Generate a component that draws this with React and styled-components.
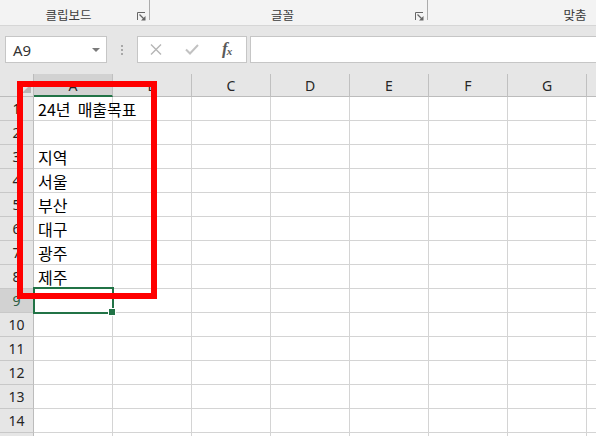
import React from 'react';
import styled, { createGlobalStyle } from 'styled-components';

const GlobalStyle = createGlobalStyle`
  body {
    margin: 0;
    font-family: "Noto Sans", "Noto Sans CJK KR", sans-serif;
  }
`;

const COLS = ['A', 'B', 'C', 'D', 'E', 'F', 'G', 'H'];
const ROWS = 15;
const cellText = {
  1: '24년  매출목표',
  3: '지역',
  4: '서울',
  5: '부산',
  6: '대구',
  7: '광주',
  8: '제주',
};
const SELECTED_ROW = 9;
const GREEN = '#217346';

const Page = styled.div`
  position: relative;
  width: 596px;
  height: 436px;
  overflow: hidden;
  background: #e6e6e6;
`;

const Ribbon = styled.div`
  display: flex;
  height: 25px;
  background: #f3f3f3;
  border-bottom: 1px solid #d6d6d6;
`;

const Group = styled.div`
  display: flex;
  flex: 0 0 ${props => props.width}px;
  align-items: flex-end;
`;

const GroupLabel = styled.div`
  flex: 1;
  text-align: center;
  font-family: "Noto Sans CJK KR", sans-serif;
  font-size: 12.5px;
  line-height: 16px;
  color: #3c3c3c;
  padding-bottom: 2px;
`;

const Launcher = styled.svg`
  width: 9px;
  height: 9px;
  margin: 0 3px 4px 0;
`;

const Separator = styled.div`
  flex: 0 0 1px;
  height: 20px;
  align-self: flex-start;
  background: #ababab;
`;

const FormulaArea = styled.div`
  display: flex;
  height: 27px;
  padding: 10px 0 11px 5px;
`;

const NameBox = styled.div`
  display: flex;
  align-items: center;
  width: 102px;
  box-sizing: border-box;
  border: 1px solid #c6c6c6;
  background: #fff;
  padding: 0 6px 0 7px;
  font-size: 15px;
  color: #333;
`;

const NameText = styled.span`
  flex: 1;
`;

const Caret = styled.span`
  width: 0;
  height: 0;
  border-left: 4px solid transparent;
  border-right: 4px solid transparent;
  border-top: 4px solid #7a7a7a;
`;

const Dots = styled.div`
  display: flex;
  flex-direction: column;
  align-items: center;
  justify-content: center;
  gap: 2px;
  width: 30px;
`;

const Dot = styled.span`
  width: 2px;
  height: 2px;
  background: #a8a8a8;
`;

const FxBox = styled.div`
  display: flex;
  align-items: center;
  gap: 23px;
  width: 110px;
  box-sizing: border-box;
  border: 1px solid #c6c6c6;
  background: #fff;
  padding-left: 12px;
  margin-right: 3px;
`;

const Fx = styled.span`
  font-family: "Liberation Serif", serif;
  font-style: italic;
  font-weight: bold;
  font-size: 17px;
  line-height: 17px;
  color: #5a5a5a;
  letter-spacing: -1px;
  sub {
    font-size: 11px;
    vertical-align: -1px;
  }
`;

const FormulaInput = styled.div`
  flex: 1;
  border: 1px solid #c6c6c6;
  border-right: none;
  background: #fff;
`;

const Sheet = styled.div`
  display: grid;
  grid-template-columns: 34px repeat(8, 79px);
  grid-template-rows: 23px;
  grid-auto-rows: 24px;
`;

const Corner = styled.div`
  display: flex;
  align-items: flex-end;
  justify-content: flex-end;
  box-sizing: border-box;
  border-right: 1px solid #bcbcbc;
  border-bottom: 1px solid #bcbcbc;
  padding: 0 2px 3px 0;
`;

const CornerMark = styled.span`
  width: 0;
  height: 0;
  border-left: 9px solid transparent;
  border-bottom: 9px solid #b6b6b6;
`;

const ColHeader = styled.div`
  display: flex;
  align-items: center;
  justify-content: center;
  box-sizing: border-box;
  background: ${props => (props.active ? '#d2d2d2' : '#e6e6e6')};
  border-right: 1px solid #c0c0c0;
  border-bottom: ${props => (props.active ? `2px solid ${GREEN}` : '1px solid #bcbcbc')};
  font-size: 14px;
  color: #262626;
  padding-top: ${props => (props.active ? '1px' : '0')};
`;

const RowHeader = styled.div`
  display: flex;
  align-items: center;
  justify-content: center;
  box-sizing: border-box;
  background: ${props => (props.active ? '#d2d2d2' : '#e6e6e6')};
  border-right: 1px solid #bcbcbc;
  border-bottom: 1px solid #c8c8c8;
  font-size: 14px;
  color: ${props => (props.active ? '#2f5f45' : '#262626')};
`;

const Cell = styled.div`
  position: relative;
  display: flex;
  align-items: center;
  box-sizing: border-box;
  background: #fff;
  border-right: 1px solid #d4d4d4;
  border-bottom: 1px solid #d4d4d4;
  padding-left: 4px;

  ${props => props.selected && `
    &::after {
      content: '';
      position: absolute;
      left: -1px;
      top: -2px;
      width: 81px;
      height: 27px;
      box-sizing: border-box;
      border: 2px solid ${GREEN};
      z-index: 2;
    }
    &::before {
      content: '';
      position: absolute;
      left: 75px;
      top: 20px;
      width: 6px;
      height: 6px;
      background: ${GREEN};
      box-shadow: 0 0 0 1px #fff;
      z-index: 3;
    }
  `}
`;

/* text spills over the next empty cell, as in Excel */
const CellText = styled.span`
  position: relative;
  z-index: 1;
  font-family: "Noto Sans CJK KR", sans-serif;
  font-size: 16px;
  color: #000;
  white-space: pre;
`;

const Annotation = styled.div`
  position: absolute;
  left: 17px;
  top: 81px;
  width: 140px;
  height: 218px;
  box-sizing: border-box;
  border: 6px solid #ff0000;
  z-index: 5;
  pointer-events: none;
`;

const LauncherIcon = () => (
  <Launcher viewBox="0 0 9 9">
    <path d="M0.5 8V0.5H8" fill="none" stroke="#666" strokeWidth="1" />
    <path d="M2.5 2.5L7 7" fill="none" stroke="#666" strokeWidth="1.2" />
    <path d="M8.5 4V8.5H4Z" fill="#666" />
  </Launcher>
);

const CancelIcon = () => (
  <svg width="12" height="11" viewBox="0 0 12 11">
    <path d="M1 0.5L11 10.5M11 0.5L1 10.5" stroke="#b5b5b5" strokeWidth="1.4" fill="none" />
  </svg>
);

const EnterIcon = () => (
  <svg width="14" height="11" viewBox="0 0 14 11">
    <path d="M1 5.5L5 9.5L13 1" stroke="#c2c2c2" strokeWidth="2" fill="none" />
  </svg>
);

const App = () => {
  const rows = [];
  for (let r = 1; r <= ROWS; r++) {
    const active = r === SELECTED_ROW;
    rows.push(<RowHeader key={`h${r}`} active={active}>{r}</RowHeader>);
    COLS.forEach(col => {
      const text = col === 'A' ? cellText[r] : null;
      rows.push(
        <Cell key={`${col}${r}`} selected={active && col === 'A'}>
          {text && <CellText>{text}</CellText>}
        </Cell>
      );
    });
  }

  return (
    <Page>
      <GlobalStyle />
      <Ribbon>
        <Group width={149}>
          <GroupLabel>클립보드</GroupLabel>
          <LauncherIcon />
        </Group>
        <Separator />
        <Group width={277}>
          <GroupLabel>글꼴</GroupLabel>
          <LauncherIcon />
        </Group>
        <Separator />
        <Group width={294}>
          <GroupLabel>맞춤</GroupLabel>
        </Group>
      </Ribbon>

      <FormulaArea>
        <NameBox>
          <NameText>A9</NameText>
          <Caret />
        </NameBox>
        <Dots>
          <Dot />
          <Dot />
          <Dot />
        </Dots>
        <FxBox>
          <CancelIcon />
          <EnterIcon />
          <Fx>f<sub>x</sub></Fx>
        </FxBox>
        <FormulaInput />
      </FormulaArea>

      <Sheet>
        <Corner>
          <CornerMark />
        </Corner>
        {COLS.map(col => (
          <ColHeader key={col} active={col === 'A'}>{col}</ColHeader>
        ))}
        {rows}
      </Sheet>

      <Annotation />
    </Page>
  );
};

export default App;
